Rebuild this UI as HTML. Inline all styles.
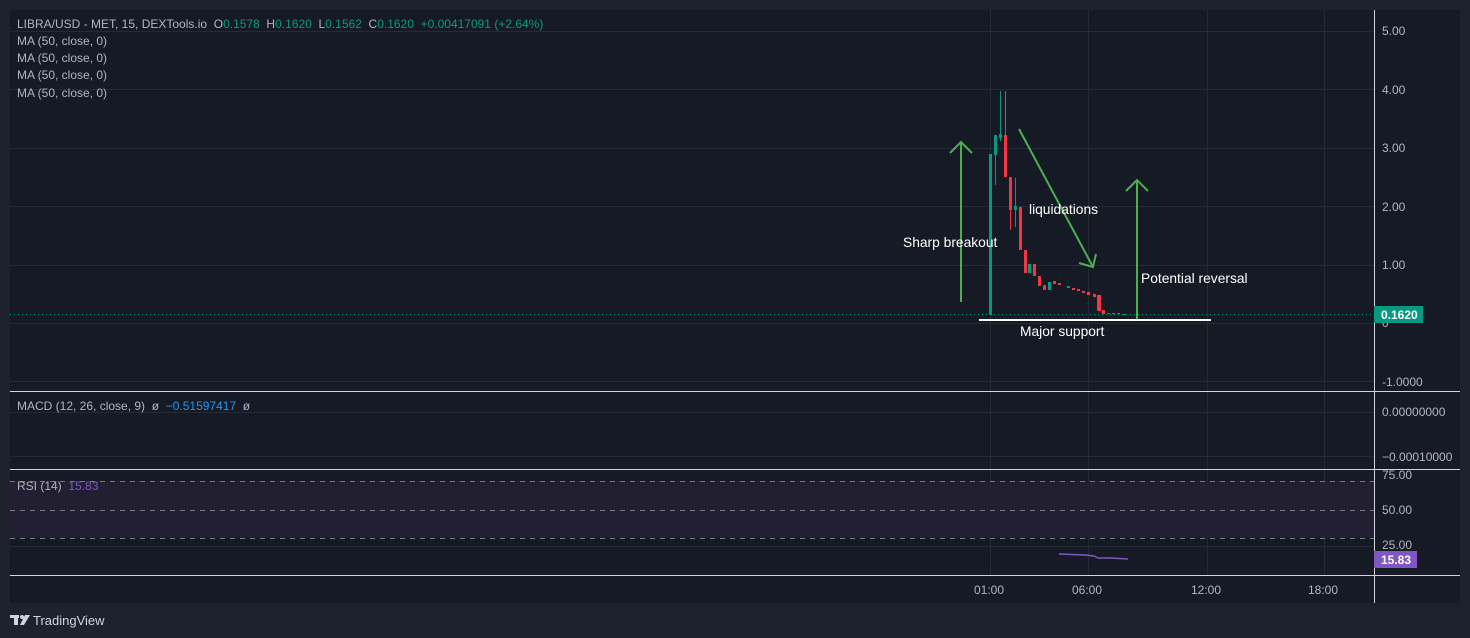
<!DOCTYPE html>
<html><head><meta charset="utf-8"><style>
html,body{margin:0;padding:0;width:1470px;height:638px;overflow:hidden;background:#1e222d;font-family:"Liberation Sans",sans-serif;}
svg{position:absolute;left:0;top:0}
text{white-space:pre}
</style></head><body>
<svg width="1470" height="638" viewBox="0 0 1470 638" font-family="Liberation Sans, sans-serif" xml:space="preserve">
<rect x="0" y="0" width="1470" height="638" fill="#1e222d"/>
<rect x="10" y="10" width="1450" height="593" fill="#161a25"/>
<g stroke="#262a36" stroke-width="1">
<line x1="10" y1="31.5" x2="1374" y2="31.5"/><line x1="10" y1="89.5" x2="1374" y2="89.5"/><line x1="10" y1="148.5" x2="1374" y2="148.5"/><line x1="10" y1="206.5" x2="1374" y2="206.5"/><line x1="10" y1="265.5" x2="1374" y2="265.5"/><line x1="10" y1="323.5" x2="1374" y2="323.5"/><line x1="10" y1="381.5" x2="1374" y2="381.5"/>
<line x1="10" y1="412.5" x2="1374" y2="412.5"/><line x1="10" y1="456.5" x2="1374" y2="456.5"/><line x1="10" y1="546.5" x2="1374" y2="546.5"/>
<line x1="990.5" y1="10" x2="990.5" y2="575"/><line x1="1088.5" y1="10" x2="1088.5" y2="575"/><line x1="1207.5" y1="10" x2="1207.5" y2="575"/><line x1="1324.5" y1="10" x2="1324.5" y2="575"/>
</g>
<rect x="10" y="481" width="1364" height="57" fill="#221f33"/>
<g stroke="#787b86" stroke-width="1" stroke-dasharray="5,5">
<line x1="10" y1="481.5" x2="1374" y2="481.5"/><line x1="10" y1="510.5" x2="1374" y2="510.5"/><line x1="10" y1="538.5" x2="1374" y2="538.5"/>
</g>
<g stroke="#d1d4dc" stroke-width="1">
<line x1="10" y1="391.5" x2="1460" y2="391.5"/><line x1="10" y1="469.5" x2="1460" y2="469.5"/><line x1="10" y1="575.5" x2="1460" y2="575.5"/>
<line x1="1374.5" y1="10" x2="1374.5" y2="603"/>
</g>
<line x1="10" y1="314.5" x2="1374" y2="314.5" stroke="#089981" stroke-width="1" stroke-dasharray="1,3"/>
<g fill="#089981" stroke="#089981">
<rect x="989" y="154" width="3" height="161" stroke="none"/>
<line x1="995.5" y1="142" x2="995.5" y2="185"/><rect x="994" y="135" width="3" height="20" stroke="none"/>
<line x1="1000.5" y1="91" x2="1000.5" y2="141"/><rect x="999" y="134" width="3" height="4" stroke="none"/>
<line x1="1015.5" y1="178" x2="1015.5" y2="227"/><rect x="1014" y="206" width="3" height="4" stroke="none"/>
<rect x="1028" y="264" width="3" height="9" stroke="none"/>
<rect x="1030" y="270" width="1" height="2" stroke="none"/>
<rect x="1048" y="282" width="3" height="8" stroke="none"/>
<rect x="1067" y="286" width="3" height="2" stroke="none"/>
<rect x="1107" y="313" width="3" height="1" stroke="none"/>
<rect x="1123" y="314" width="3" height="1" stroke="none"/>
</g>
<g fill="#f23645" stroke="#f23645">
<line x1="1005.5" y1="91" x2="1005.5" y2="176"/><rect x="1004" y="135" width="3" height="42" stroke="none"/>
<line x1="1010.5" y1="177" x2="1010.5" y2="230"/><rect x="1009" y="177" width="3" height="33" stroke="none"/>
<rect x="1019" y="207" width="3" height="43" stroke="none"/>
<rect x="1024" y="250" width="3" height="23" stroke="none"/>
<rect x="1033" y="264" width="3" height="12" stroke="none"/>
<rect x="1038" y="276" width="3" height="10" stroke="none"/>
<rect x="1043" y="285" width="3" height="5" stroke="none"/>
<rect x="1053" y="281" width="3" height="3" stroke="none"/>
<rect x="1058" y="283" width="3" height="2" stroke="none"/>
<rect x="1072" y="288" width="3" height="2" stroke="none"/>
<rect x="1077" y="289" width="3" height="2" stroke="none"/>
<rect x="1082" y="291" width="3" height="2" stroke="none"/>
<rect x="1087" y="292" width="3" height="3" stroke="none"/>
<rect x="1093" y="294" width="3" height="3" stroke="none"/>
<rect x="1097" y="295" width="4" height="16" stroke="none"/>
<rect x="1102" y="310" width="3" height="4" stroke="none"/>
<rect x="1112" y="313" width="3" height="1" stroke="none"/>
<rect x="1117" y="313" width="3" height="1" stroke="none"/>
</g>
<g stroke="#4caf50" stroke-width="2" fill="none">
<line x1="961" y1="302" x2="961" y2="142"/><polyline points="950,153 961,142 972,153"/>
<line x1="1137" y1="319" x2="1137" y2="180"/><polyline points="1126,191 1137,180 1148,191"/>
<line x1="1019" y1="129" x2="1093" y2="267"/><polyline points="1079,263 1093,267 1096,254"/>
</g>
<line x1="979" y1="320" x2="1211" y2="320" stroke="#ffffff" stroke-width="2"/>
<g fill="#ffffff" font-size="13.8">
<text x="903" y="247">Sharp breakout</text>
<text x="1029" y="214">liquidations</text>
<text x="1141" y="283">Potential reversal</text>
<text x="1020" y="336">Major support</text>
</g>
<polyline points="1059,554 1085,555 1094,556 1098,558 1110,558 1128,559" stroke="#7e57c2" stroke-width="1.5" fill="none"/>
<g fill="#b2b5be" font-size="12">
<text x="1382" y="35">5.00</text><text x="1382" y="94">4.00</text><text x="1382" y="152">3.00</text><text x="1382" y="211">2.00</text><text x="1382" y="269">1.00</text><text x="1382" y="327">0</text><text x="1382" y="386">-1.0000</text>
<text x="1382" y="416">0.00000000</text><text x="1382" y="461">−0.00010000</text>
<text x="1382" y="479">75.00</text><text x="1382" y="514">50.00</text><text x="1382" y="549">25.00</text>
<text x="974" y="594">01:00</text><text x="1072" y="594">06:00</text><text x="1191" y="594">12:00</text><text x="1308" y="594">18:00</text>
</g>
<rect x="1374" y="306" width="49" height="17" fill="#089981"/>
<text x="1381" y="319" fill="#fff" font-size="12" font-weight="bold">0.1620</text>
<rect x="1374" y="551" width="43" height="17" fill="#7e57c2"/>
<text x="1381" y="564" fill="#fff" font-size="12" font-weight="bold">15.83</text>
<g font-size="12" fill="#b2b5be">
<text x="17" y="28">LIBRA/USD - MET, 15, DEXTools.io  O<tspan fill="#089981">0.1578</tspan>  H<tspan fill="#089981">0.1620</tspan>  L<tspan fill="#089981">0.1562</tspan>  C<tspan fill="#089981">0.1620</tspan>  <tspan fill="#089981">+0.00417091 (+2.64%)</tspan></text>
<text x="17" y="45">MA (50, close, 0)</text>
<text x="17" y="62">MA (50, close, 0)</text>
<text x="17" y="79">MA (50, close, 0)</text>
<text x="17" y="97">MA (50, close, 0)</text>
<text x="17" y="410">MACD (12, 26, close, 9)  ø  <tspan fill="#2196f3">−0.51597417</tspan>  ø</text>
<text x="17" y="490">RSI (14)  <tspan fill="#7e57c2">15.83</tspan></text>
</g>
<g fill="#d1d4dc">
<rect x="10" y="615" width="9" height="3"/><rect x="14" y="615" width="4" height="10"/>
<circle cx="22" cy="617" r="2"/><polygon points="25,615 30,615 24,625 20,625"/>
<text x="33" y="625" font-size="13">TradingView</text>
</g>
</svg>
</body></html>
